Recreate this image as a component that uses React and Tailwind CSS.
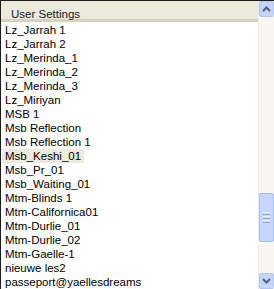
const items = [
  "Lz_Jarrah 1",
  "Lz_Jarrah 2",
  "Lz_Merinda_1",
  "Lz_Merinda_2",
  "Lz_Merinda_3",
  "Lz_Miriyan",
  "MSB 1",
  "Msb Reflection",
  "Msb Reflection 1",
  "Msb_Keshi_01",
  "Msb_Pr_01",
  "Msb_Waiting_01",
  "Mtm-Blinds 1",
  "Mtm-Californica01",
  "Mtm-Durlie_01",
  "Mtm-Durlie_02",
  "Mtm-Gaelle-1",
  "nieuwe les2",
  "passeport@yaellesdreams",
];

function Chevron({ up }) {
  return (
    <svg width="9" height="6" viewBox="0 0 9 6">
      <path
        d={up ? "M1 5 L4.5 1.5 L8 5" : "M1 1 L4.5 4.5 L8 1"}
        fill="none"
        stroke="#4d6185"
        strokeWidth="2"
      />
    </svg>
  );
}

export default function App() {
  return (
    <div className="w-[274px] h-[289px] overflow-hidden bg-white border-t border-l border-[#1c1c1c] flex font-['Liberation_Sans',Arial,sans-serif] text-[11.5px] text-black">
      <div className="flex-1 flex flex-col min-w-0">
        <div className="h-[21px] shrink-0 bg-[#ebeadb] border-b-[3px] border-[#d6d2c1] pl-[10px] pt-[7px] leading-[13px] text-[#1a1a1a]">
          User Settings
        </div>
        <ul className="pt-[1px]">
          {items.map((name) => (
            <li key={name} className="h-[14px] leading-[14px] pl-[1px] whitespace-nowrap">
              <span
                className={
                  name === "Msb_Keshi_01"
                    ? "inline-block px-[3px] bg-[#ecebdf]"
                    : "inline-block px-[3px]"
                }
              >
                {name}
              </span>
            </li>
          ))}
        </ul>
      </div>
      <div className="w-[16px] shrink-0 flex flex-col bg-[#f7f6f0] border-l border-[#eeede5]">
        <div className="h-[16px] shrink-0 bg-[#c6d4fa] border border-[#b5c6ee] rounded-[2px] flex items-center justify-center">
          <Chevron up />
        </div>
        <div className="h-[176px] shrink-0" />
        <div className="h-[49px] shrink-0 bg-[#c8d6fb] border border-[#a9bff2] rounded-[2px] flex flex-col items-center justify-center gap-[1px]">
          <div className="w-[7px] h-[1px] bg-[#eef3fe]" />
          <div className="w-[7px] h-[1px] bg-[#8ca5e0]" />
          <div className="w-[7px] h-[1px] bg-[#eef3fe]" />
          <div className="w-[7px] h-[1px] bg-[#8ca5e0]" />
          <div className="w-[7px] h-[1px] bg-[#eef3fe]" />
          <div className="w-[7px] h-[1px] bg-[#8ca5e0]" />
        </div>
        <div className="flex-1" />
        <div className="h-[16px] shrink-0 bg-[#c6d4fa] border border-[#b5c6ee] rounded-[2px] flex items-center justify-center">
          <Chevron />
        </div>
      </div>
    </div>
  );
}
